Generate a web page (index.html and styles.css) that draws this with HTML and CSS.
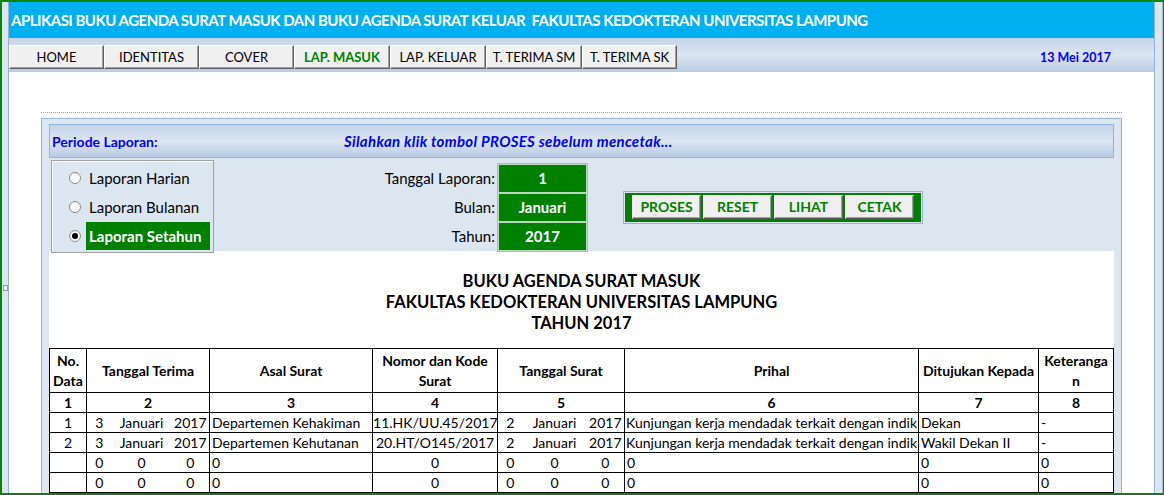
FILE: index.html
```html
<!DOCTYPE html>
<html lang="id">
<head>
<meta charset="utf-8">
<title>Lap. Masuk</title>
<link rel="stylesheet" href="styles.css">
</head>
<body>
<div class="frame">
  <div class="lstrip"><span class="handle"></span></div>
  <div class="main">
    <header class="titlebar">APLIKASI BUKU AGENDA SURAT MASUK DAN BUKU AGENDA SURAT KELUAR&nbsp; FAKULTAS KEDOKTERAN UNIVERSITAS LAMPUNG</header>
    <nav class="navbar">
      <div class="tabs">
        <span class="tab">HOME</span>
        <span class="tab">IDENTITAS</span>
        <span class="tab">COVER</span>
        <span class="tab wide active">LAP. MASUK</span>
        <span class="tab wide">LAP. KELUAR</span>
        <span class="tab wide">T. TERIMA SM</span>
        <span class="tab">T. TERIMA SK</span>
      </div>
      <span class="date">13 Mei 2017</span>
    </nav>
    <section class="content">
      <div class="dots"></div>
      <div class="panel">
        <div class="phead">
          <span class="plabel">Periode Laporan:</span>
          <span class="pnote">Silahkan klik tombol PROSES sebelum mencetak...</span>
        </div>
        <div class="controls">
          <div class="radios">
            <div class="ropt"><span class="rdot"></span><span class="rtext">Laporan Harian</span></div>
            <div class="ropt"><span class="rdot"></span><span class="rtext">Laporan Bulanan</span></div>
            <div class="ropt"><span class="rdot checked"></span><span class="rtext sel">Laporan Setahun</span></div>
          </div>
          <div class="flabels">
            <span class="flabel">Tanggal Laporan:</span>
            <span class="flabel">Bulan:</span>
            <span class="flabel">Tahun:</span>
          </div>
          <div class="fboxes">
            <span class="fbox">1</span>
            <span class="fbox">Januari</span>
            <span class="fbox">2017</span>
          </div>
          <div class="actions">
            <div class="btngroup">
              <span class="btn">PROSES</span>
              <span class="btn">RESET</span>
              <span class="btn">LIHAT</span>
              <span class="btn">CETAK</span>
            </div>
          </div>
        </div>
        <div class="sheet">
          <h1 class="rtitle">BUKU AGENDA SURAT MASUK<br>FAKULTAS KEDOKTERAN UNIVERSITAS LAMPUNG<br>TAHUN 2017</h1>
          <table class="grid">
            <colgroup>
              <col class="c37"><col class="c25"><col class="c60"><col class="c38"><col class="c163"><col class="c125"><col class="c25"><col class="c64"><col class="c38"><col class="c294"><col class="c120"><col class="c75">
            </colgroup>
            <thead>
              <tr class="hr1">
                <th>No.<br>Data</th><th colspan="3">Tanggal Terima</th><th>Asal Surat</th><th>Nomor dan Kode<br>Surat</th><th colspan="3">Tanggal Surat</th><th>Prihal</th><th>Ditujukan Kepada</th><th>Keteranga<br>n</th>
              </tr>
              <tr class="hr2">
                <th>1</th><th colspan="3">2</th><th>3</th><th>4</th><th colspan="3">5</th><th>6</th><th>7</th><th>8</th>
              </tr>
            </thead>
            <tbody>
              <tr>
                <td class="ctr">1</td><td class="d">3</td><td class="m">Januari</td><td class="y">2017</td><td class="lft">Departemen Kehakiman</td><td class="ctr">11.HK/UU.45/2017</td><td class="d">2</td><td class="m">Januari</td><td class="y">2017</td><td class="lft clip">Kunjungan kerja mendadak terkait dengan indik</td><td class="lft">Dekan</td><td class="lft">-</td>
              </tr>
              <tr>
                <td class="ctr">2</td><td class="d">3</td><td class="m">Januari</td><td class="y">2017</td><td class="lft">Departemen Kehutanan</td><td class="ctr">20.HT/O145/2017</td><td class="d">2</td><td class="m">Januari</td><td class="y">2017</td><td class="lft clip">Kunjungan kerja mendadak terkait dengan indik</td><td class="lft">Wakil Dekan II</td><td class="lft">-</td>
              </tr>
              <tr>
                <td></td><td class="d">0</td><td class="m">0</td><td class="y">0</td><td class="lft">0</td><td class="ctr">0</td><td class="d">0</td><td class="m">0</td><td class="y">0</td><td class="lft">0</td><td class="lft">0</td><td class="lft">0</td>
              </tr>
              <tr>
                <td></td><td class="d">0</td><td class="m">0</td><td class="y">0</td><td class="lft">0</td><td class="ctr">0</td><td class="d">0</td><td class="m">0</td><td class="y">0</td><td class="lft">0</td><td class="lft">0</td><td class="lft">0</td>
              </tr>
            </tbody>
          </table>
        </div>
      </div>
    </section>
  </div>
  <div class="rstrip"></div>
</div>
</body>
</html>
```
FILE: styles.css
```css
* { box-sizing: border-box; margin: 0; padding: 0; }
html, body { width: 1164px; height: 495px; overflow: hidden; background: #fff; }
body { font-family: Lato, "Liberation Sans", sans-serif; color: #000; }

.frame {
  display: flex;
  width: 1164px;
  height: 495px;
  border: solid #0b840b;
  border-width: 2px 1px 2px 2px;
  overflow: hidden;
}
.lstrip {
  width: 7px;
  flex: none;
  background: #dce6f2;
  border-right: 1px solid #95b3d7;
  display: flex;
  flex-direction: column;
  align-items: flex-end;
  padding-top: 283px;
}
.handle { width: 5px; height: 6px; background: #fff; border: 1px solid #9a9a9a; }
.main { flex: 1; min-width: 0; display: flex; flex-direction: column; }
.rstrip {
  width: 9px;
  flex: none;
  background: #dce6f2;
  border-left: 1px solid #95b3d7;
  border-right: 1px solid #a9b9d0;
}

.titlebar {
  height: 36px;
  flex: none;
  background: #00b0f0;
  color: #fff;
  font-weight: 700;
  font-size: 15px;
  letter-spacing: -0.5px;
  line-height: 36px;
  padding-left: 2px;
  white-space: nowrap;
}

.navbar {
  height: 34px;
  flex: none;
  background: linear-gradient(#c4d4ea, #dbe5f1 50%, #b8cbe4);
  display: flex;
  justify-content: space-between;
  align-items: flex-start;
  padding: 7px 43px 0 0;
}
.tabs { display: flex; }
.tab {
  width: 95px;
  height: 24px;
  background: #f0f0f0;
  border: 1px solid;
  border-color: #fff #5e5e5e #5e5e5e #fff;
  box-shadow: inset -1px -1px 0 #a0a0a0;
  font-size: 13px;
  line-height: 22px;
  text-align: center;
  white-space: nowrap;
}
.tab.wide { width: 96px; }
.tab.active { color: #008000; font-weight: 700; }
.date { color: #0000ff; font-weight: 700; font-size: 12.5px; line-height: 24px; margin-top: 1px; }

.content { flex: 1; min-height: 0; background: #fff; padding: 40px 32px 0; }
.dots { border-top: 1px dotted #9a9a9a; }
.panel {
  margin-top: 5px;
  border: 1px solid #95b3d7;
  background: #dce6f1;
  padding: 5px 7px 0;
  height: 420px;
}
.phead {
  height: 34px;
  border: 1px solid #95b3d7;
  background: linear-gradient(#c4d4ea, #dbe5f1 50%, #b8cbe4);
  display: flex;
  align-items: center;
  padding-left: 2px;
  color: #0000ff;
  font-weight: 700;
  font-size: 14px;
}
.plabel { flex: 0 0 292px; }
.pnote { font-style: italic; font-size: 15px; letter-spacing: 0.3px; }

.controls { height: 93px; display: flex; align-items: flex-start; }
.radios {
  position: relative;
  z-index: 1;
  width: 163px;
  height: 93px;
  margin: 2px 0 0 2px;
  border: 1px solid #a0a0a0;
  box-shadow: inset 1px 1px 0 #fff;
  background: #dce6f1;
  padding-top: 2px;
}
.ropt { height: 29px; display: flex; align-items: center; padding-left: 17px; }
.rdot {
  width: 12px;
  height: 12px;
  border-radius: 50%;
  border: 1px solid #8d8d8d;
  background: radial-gradient(circle at 60% 60%, #fff 40%, #e6e6e6);
  margin-right: 5px;
  display: flex;
  align-items: center;
  justify-content: center;
}
.rdot.checked::after { content: ""; width: 6px; height: 6px; border-radius: 50%; background: #000; }
.rtext { height: 28px; line-height: 28px; padding: 0 3px; font-size: 15px; white-space: nowrap; }
.rtext.sel { width: 124px; background: #008000; color: #fff; font-weight: 700; }

.flabels { width: 281px; margin-top: 6px; display: flex; flex-direction: column; }
.flabel { height: 29px; line-height: 28px; text-align: right; font-size: 15px; }
.fboxes {
  width: 91px;
  margin: 5px 0 0 2px;
  border: 1px solid #9fbadd;
  display: flex;
  flex-direction: column;
}
.fbox {
  height: 29px;
  background: #008000;
  border: 1px solid #bcd8bc;
  color: #fff;
  font-weight: 700;
  font-size: 15px;
  line-height: 27px;
  text-align: center;
}
.actions {
  margin: 33px 0 0 35px;
  border: 1px solid #95b3d7;
  padding: 1px;
}
.btngroup {
  display: flex;
  gap: 2px;
  background: #008000;
  padding: 2px 7px 3px 7px;
}
.btn {
  width: 69px;
  height: 24px;
  background: #f0f0f0;
  border: 1px solid;
  border-color: #fff #5e5e5e #5e5e5e #fff;
  box-shadow: inset -1px -1px 0 #a0a0a0;
  color: #008000;
  font-weight: 700;
  font-size: 14px;
  line-height: 22px;
  text-align: center;
}

.sheet { background: #fff; padding-top: 20px; height: 400px; }
.rtitle {
  text-align: center;
  font-size: 16.5px;
  line-height: 21px;
  font-weight: 700;
  margin-bottom: 14px;
}
.grid {
  width: 1065px;
  table-layout: fixed;
  border-collapse: collapse;
  font-size: 14px;
}
.grid th, .grid td { border: 1px solid #000; white-space: nowrap; overflow: hidden; }
.grid th { font-weight: 700; text-align: center; }
.hr1 { height: 44px; }
.hr1 th { line-height: 20px; }
.hr2 th, .grid td { height: 20px; line-height: 18px; }
.grid td { text-align: center; }
.grid td.lft { text-align: left; padding-left: 2px; }
.grid td.clip { text-overflow: clip; padding-left: 1px; }
.grid td.d { border-right-style: hidden; }
.grid td.m { border-left-style: hidden; border-right-style: hidden; }
.grid td.y { border-left-style: hidden; }
.c37 { width: 37px; }
.c25 { width: 25px; }
.c60 { width: 60px; }
.c38 { width: 38px; }
.c163 { width: 163px; }
.c125 { width: 125px; }
.c64 { width: 64px; }
.c294 { width: 294px; }
.c120 { width: 120px; }
.c75 { width: 75px; }
```
